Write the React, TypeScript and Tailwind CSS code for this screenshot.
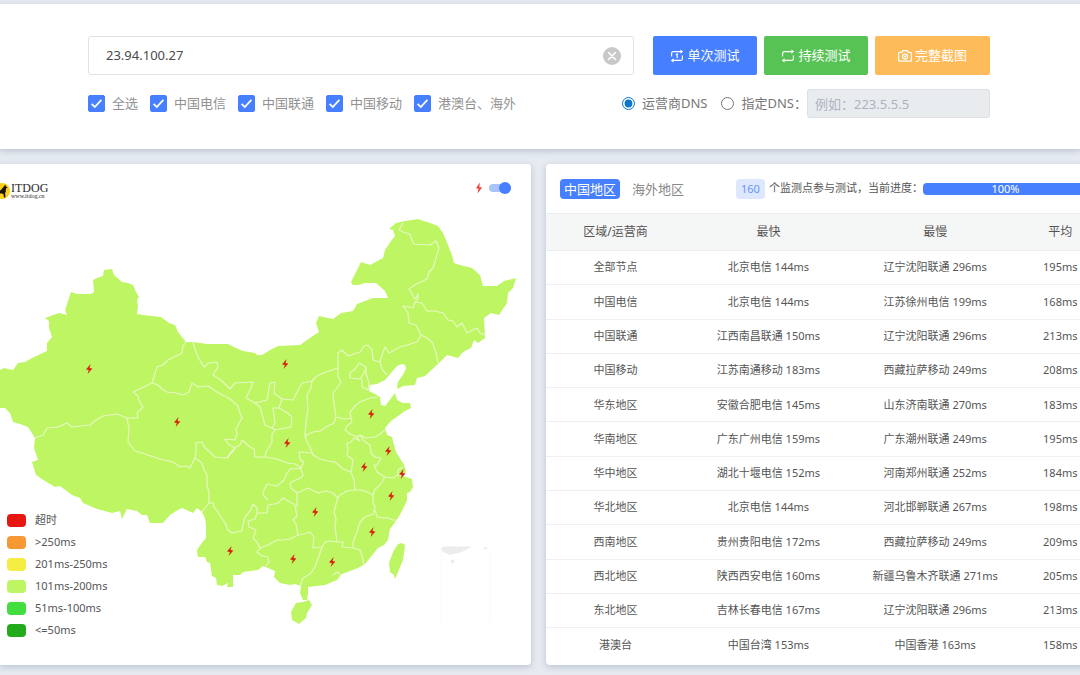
import { useState } from "react";

type ResultRow = {
  region: string;
  fastest: string;
  slowest: string;
  average: string;
};

const ISPS = ["全选", "中国电信", "中国联通", "中国移动", "港澳台、海外"];

const RESULTS: ResultRow[] = [
  { region: "全部节点", fastest: "北京电信 144ms", slowest: "辽宁沈阳联通 296ms", average: "195ms" },
  { region: "中国电信", fastest: "北京电信 144ms", slowest: "江苏徐州电信 199ms", average: "168ms" },
  { region: "中国联通", fastest: "江西南昌联通 150ms", slowest: "辽宁沈阳联通 296ms", average: "213ms" },
  { region: "中国移动", fastest: "江苏南通移动 183ms", slowest: "西藏拉萨移动 249ms", average: "208ms" },
  { region: "华东地区", fastest: "安徽合肥电信 145ms", slowest: "山东济南联通 270ms", average: "183ms" },
  { region: "华南地区", fastest: "广东广州电信 159ms", slowest: "广东潮州联通 249ms", average: "195ms" },
  { region: "华中地区", fastest: "湖北十堰电信 152ms", slowest: "河南郑州联通 252ms", average: "184ms" },
  { region: "华北地区", fastest: "北京电信 144ms", slowest: "河北邯郸联通 267ms", average: "198ms" },
  { region: "西南地区", fastest: "贵州贵阳电信 172ms", slowest: "西藏拉萨移动 249ms", average: "209ms" },
  { region: "西北地区", fastest: "陕西西安电信 160ms", slowest: "新疆乌鲁木齐联通 271ms", average: "205ms" },
  { region: "东北地区", fastest: "吉林长春电信 167ms", slowest: "辽宁沈阳联通 296ms", average: "213ms" },
  { region: "港澳台", fastest: "中国台湾 153ms", slowest: "中国香港 163ms", average: "158ms" },
];

const LEGEND = [
  { label: "超时", color: "bg-[#e61610]" },
  { label: ">250ms", color: "bg-[#f69833]" },
  { label: "201ms-250ms", color: "bg-[#f6ed44]" },
  { label: "101ms-200ms", color: "bg-[#bef663]" },
  { label: "51ms-100ms", color: "bg-[#42dd3f]" },
  { label: "<=50ms", color: "bg-[#24aa1d]" },
];

const MAINLAND =
  "-4,371 0,370 4,368 8,369 13,370 18,363 25,362 32,358 47,351 47,343 52,337 49,328 49,321 45,318 59,313 67,315 65,310 71,292 77,294 91,294 94,292 93,280 97,278 103,276 104,270 112,269 114,275 122,282 128,283 133,285 136,292 139,297 137,300 138,306 137,314 143,315 161,317 169,323 175,325 178,332 186,342 193,342 207,344 228,344 236,348 243,351 255,353 257,355 262,355 270,350 278,346 300,345 310,338 319,332 316,323 319,316 333,319 341,313 353,311 357,304 373,298 388,298 385,291 376,283 365,283 358,285 353,285 351,282 361,262 370,265 383,258 385,250 391,241 395,236 393,230 389,229 396,223 405,221 418,219 430,223 438,226 443,233 448,245 452,255 454,263 460,265 472,268 480,275 483,286 497,286 504,281 516,278 513,288 508,293 507,303 503,309 499,315 491,313 484,318 485,338 478,343 474,340 471,348 463,352 458,358 447,355 439,363 425,376 417,378 415,385 403,386 398,389 397,387 398,382 404,373 406,368 405,365 402,364 397,366 391,373 385,380 377,384 370,385 369,391 375,394 380,397 381,405 385,406 392,397 395,393 397,400 403,403 410,403 411,408 405,411 398,416 391,421 385,428 387,435 392,437 394,445 396,452 401,460 404,465 406,472 403,476 412,479 413,487 410,492 407,493 407,500 404,507 398,518 393,525 390,529 389,534 388,540 384,545 378,548 365,564 358,568 342,574 337,580 325,585 308,587 308,593 307,600 303,600 300,593 301,586 295,584 290,585 280,583 274,577 275,571 268,568 263,566 258,570 243,572 240,575 233,575 233,587 227,587 228,583 222,586 217,585 216,578 212,576 210,563 207,562 205,557 198,557 197,550 201,544 206,538 206,525 205,518 202,512 197,508 193,513 182,508 176,511 170,515 163,523 150,523 147,515 142,515 137,511 127,509 122,519 120,511 112,513 97,509 90,506 83,503 80,498 72,495 60,486 55,487 45,481 36,475 32,462 38,460 34,448 35,438 28,427 20,424 13,422 10,413 5,408 -4,408";

const HAINAN = "296,603 303,602 309,600 312,605 307,613 306,618 299,624 292,620 291,612";
const TAIWAN = "398,544 402,543 405,545 404,553 403,560 398,572 395,579 394,575 390,572 389,563 393,552";

const BORDERS = [
  // Xinjiang, Tibet, Qinghai
  "35,438 43,435 47,428 58,427 67,423 72,427 90,425 96,420 103,416 117,414 127,418 138,418 137,413 143,407 139,401 138,396 133,392 152,383 157,367 163,365 168,360 182,353 183,346 186,342",
  "152,383 158,385 162,389 167,392 176,393 183,395 189,392 192,383 198,387 208,386 217,392 230,399 238,406 240,413 242,418 236,429 237,434 235,440 225,439 228,444 235,448 231,452 227,458 215,457 211,453 205,448 202,442 196,443 196,452 195,458 190,468 186,466 180,467 173,462 160,459 145,454 135,451 128,442 129,429 127,418",
  "195,458 202,463 204,470 207,475 207,485 209,493 209,503 205,508 202,512",
  // Inner Mongolia and Gansu
  "193,342 195,349 198,357 204,367 209,363 217,362 218,367 213,375 222,381 230,389 235,383 253,382 250,390 246,398 255,403 267,400 270,383 275,382 274,393 282,399 279,408 273,408 274,416 275,423 272,428 265,425 262,414 260,407 255,403",
  "282,399 293,400 297,392 302,383 312,381 317,376 323,373 332,370 338,368",
  "279,408 286,412 292,417 291,427 275,430 272,434 272,442 266,452 265,457 255,457 254,449 250,447 242,440 240,445 236,447 233,451 227,458",
  "272,428 275,430",
  "265,457 277,459 287,463 295,464 302,468",
  // Shanxi, Hebei, Henan
  "312,381 311,388 307,395 308,410 306,422 305,436 313,432 320,431 326,427 334,423 336,417 334,404 333,393 337,388 341,382 338,376 338,353 342,350 348,356 360,352 364,346 368,345 372,350 373,360 380,362 382,369 387,375",
  "380,362 382,355 385,347 389,353 400,347 407,345 417,342 421,335 416,325 409,323 408,313 403,306 413,308 415,302 422,303 427,311 435,311 443,313 448,320 453,321 457,327 462,323 467,333 477,328 480,333 485,335",
  "421,335 427,338 432,342 435,350 437,357 438,363",
  "403,223 399,230 403,232 410,234 412,240 414,244 430,245 436,241 439,248 436,258 433,268 429,272 427,279 416,284 409,289 412,294 415,299 418,294 418,298 415,303",
  "350,373 355,369 359,363 366,367 364,373 360,379 350,378 350,373",
  "366,367 366,374 369,383 368,390 362,387 362,379",
  "378,397 370,398 360,402 355,406 350,412 351,418 345,419 336,417",
  "351,418 352,422 347,426 345,430 350,434 357,437 360,435 366,438 375,437 380,434 385,430",
  "360,435 364,441 370,445 371,453 375,457 381,458 377,465 374,465 377,472 385,477 393,478 398,475 398,470 403,467",
  "398,475 403,476",
  "357,437 360,441 354,438 350,443 347,443 348,450 347,455 353,460 351,472 354,480 355,490 361,490 367,492 373,495 375,489 378,487 382,482 385,477",
  "305,436 307,442 310,447 313,455 320,459 327,461 335,462 343,469 351,472",
  "312,453 299,452 300,459 304,463 300,468 303,474 302,477 290,483 291,488 297,493 308,488 318,493 326,491 333,493 338,498 340,495 347,491 355,490",
  // Chongqing, Sichuan, Guizhou, Yunnan
  "302,468 290,469 286,475 284,480 277,486 267,484 264,490 263,495 268,500",
  "297,493 297,507",
  "209,503 213,503 214,507 218,512 221,517 225,523 228,530 232,533 242,531 243,524 245,517 250,511 253,504 257,508 257,513 267,513 268,505 274,504 278,503 283,498 290,502 295,505 297,516 293,520 296,524 298,535 290,539 283,540 277,540 268,545 260,548 257,542 253,538 256,530 249,527 248,521 255,519 257,513",
  "260,548 257,552 262,556 268,557 269,562 266,566",
  // Hunan, Jiangxi, Guangdong, Fujian
  "298,535 304,534 310,532 314,537 313,548 322,547 325,542 330,541 337,542 335,527 336,519 334,512 337,500 338,498",
  "337,542 343,542 342,547 353,548 360,550 362,556 364,565",
  "353,548 353,542 357,532 360,522 365,517 373,514 375,507 373,502 373,495",
  "375,510 377,517 384,518 388,518 393,520 396,520",
  "322,547 319,556 315,567 310,574 303,578 300,586",
  "333,575 337,572 341,575 338,579",
];

const NODES = [
  [89, 369],
  [285, 364],
  [177, 422],
  [287, 443],
  [371, 414],
  [388, 451],
  [364, 467],
  [402, 474],
  [391, 496],
  [315, 512],
  [372, 532],
  [230, 551],
  [293, 559],
  [332, 562],
];

const BOLT = "M4.6 0 0 5.4 2.8 6 1.6 10 6.4 4.6 3.6 4Z";

function BoltIcon() {
  return (
    <svg viewBox="0 0 7 12" className="h-3 w-2 fill-[#f0443c]" aria-hidden="true">
      <path d="M4.4 0.5 0.4 6.3 3 6.6 2 11.6 6.6 5.4 3.8 5Z" />
    </svg>
  );
}

function LoopIcon({ once = false }: { once?: boolean }) {
  return (
    <svg viewBox="0 0 14 14" className="size-3.5" fill="none" stroke="currentColor" strokeWidth="1.2" aria-hidden="true">
      <path d="M1.6 7.6V4.2a1.6 1.6 0 0 1 1.6-1.6H11" />
      <path d="M12.4 6.4v3.4a1.6 1.6 0 0 1-1.6 1.6H3" />
      <path d="M10.4.4 13.2 2.6l-2.8 2.2ZM3.6 9.2.8 11.4l2.8 2.2Z" fill="currentColor" stroke="none" />
      {once ? <path d="M5.8 5.8 7.2 5v4.2" /> : null}
    </svg>
  );
}

function CameraIcon() {
  return (
    <svg viewBox="0 0 14 14" className="size-3.5" fill="none" stroke="currentColor" strokeWidth="1.2" aria-hidden="true">
      <path d="M1.6 3.4h2.2l1-1.8h4.4l1 1.8h2.2q1 0 1 1v6.8q0 1-1 1H1.6q-1 0-1-1V4.4q0-1 1-1Z" />
      <circle cx="7" cy="7.6" r="2.5" />
      <circle cx="7" cy="7.6" r="0.4" fill="currentColor" />
    </svg>
  );
}

function Logo() {
  return (
    <div className="-ml-1.5 flex items-center gap-px pt-1.5">
      <svg viewBox="0 0 15 15" className="size-4" aria-hidden="true">
        <circle cx="7.5" cy="7.5" r="7.5" fill="#fbd116" />
        <path d="M10.6 1.4 11 3l1.8 1.4-1.6.8-.2 3.2-.6.8.4 4-1.4.6-.6-3.6L6.4 9.6l-1.6.8.2 3.2H3.6L3 9.8 1.4 10.6l.4-1.8L6.6 6.6 9.4 3Z" fill="#17130a" />
      </svg>
      <div className="flex flex-col font-['Liberation_Serif',serif] text-[#2b2b2b]">
        <span className="text-xs leading-2.5">ITDOG</span>
        <span className="text-[6px] leading-1.5">www.itdog.cn</span>
      </div>
    </div>
  );
}

function ChinaMap() {
  return (
    <svg viewBox="0 212 531 453" className="block w-full" role="img" aria-label="中国地区延迟地图">
      <g fill="#bef663">
        <polygon points={MAINLAND} />
        <polygon points={HAINAN} />
        <polygon points={TAIWAN} />
      </g>
      <g fill="none" stroke="#e6f7c4" strokeWidth="1.2" strokeLinejoin="round">
        {BORDERS.map((points) => (
          <polyline key={points} points={points} />
        ))}
      </g>
      <g fill="#ececec">
        <path d="M441 548 445 546.500H472L462 552 450 555 443 552Z" />
        <path d="M450 561 454 559 454 562 452 564Z" />
        <path d="M484 547 488 548 485 550Z" />
      </g>
      <path d="M441 548V623M490 548V623" stroke="#fafafa" />
      <g fill="#d8260f">
        {NODES.map(([x, y]) => (
          <path key={`${x}-${y}`} d={BOLT} transform={`translate(${x - 3} ${y - 5})`} />
        ))}
      </g>
    </svg>
  );
}

export default function App() {
  const [host, setHost] = useState("23.94.100.27");
  const [dnsMode, setDnsMode] = useState<"isp" | "custom">("isp");
  const [tab, setTab] = useState<"cn" | "overseas">("cn");

  return (
    <div className="min-h-screen overflow-hidden bg-[#e6eaf1] pt-1 font-['Noto_Sans','Noto_Sans_CJK_SC',sans-serif] text-[13px] text-[#555]">
      <section className="bg-white pt-8 pr-0.5 pb-[31px] shadow-[0_2px_6px_rgba(90,110,130,0.3)]">
        <div className="mx-auto flex max-w-[902px] flex-col gap-3.5">
          <div className="flex items-stretch gap-[7px]">
            <div className="mr-3 flex h-[39px] min-w-0 flex-1 items-center rounded-[3px] border border-[#dfe2e6] pr-3 pl-[17px]">
              <input
                aria-label="域名或IP"
                value={host}
                onChange={(event) => setHost(event.target.value)}
                className="min-w-0 flex-1 bg-transparent text-[13px] text-[#4a4a4a] outline-none"
              />
              <button type="button" aria-label="清空" onClick={() => setHost("")}>
                <svg viewBox="0 0 18 18" className="size-[18px]" aria-hidden="true">
                  <circle cx="9" cy="9" r="9" fill="#c8c8c8" />
                  <path d="m5.500 5.500 7 7m0-7-7 7" stroke="#fff" strokeWidth="1.6" strokeLinecap="round" />
                </svg>
              </button>
            </div>
            <button type="button" className="flex w-26 items-center justify-center gap-[3px] rounded-xs bg-[#467fff] text-white">
              <LoopIcon once />
              单次测试
            </button>
            <button type="button" className="flex w-26 items-center justify-center gap-[3px] rounded-xs bg-[#57c355] text-white">
              <LoopIcon />
              持续测试
            </button>
            <button type="button" className="flex w-[115px] items-center justify-center gap-[3px] rounded-xs bg-[#fdbb59] text-white">
              <CameraIcon />
              完整截图
            </button>
          </div>

          <div className="flex items-center justify-between">
            <div className="flex items-center gap-3 text-[#929292]">
              {ISPS.map((isp) => (
                <label key={isp} className="flex items-center gap-[7px]">
                  <span className="grid size-[17px]">
                    <input
                      type="checkbox"
                      defaultChecked
                      className="peer col-start-1 row-start-1 size-[17px] appearance-none rounded-xs border border-[#c4c8ce] checked:border-[#467fff] checked:bg-[#467fff]"
                    />
                    <svg
                      viewBox="0 0 17 17"
                      className="pointer-events-none col-start-1 row-start-1 hidden size-[17px] peer-checked:block"
                      fill="none"
                      stroke="#fff"
                      strokeWidth="1.8"
                      aria-hidden="true"
                    >
                      <path d="m3.600 8.800 3.200 3.200 6.600-7.200" />
                    </svg>
                  </span>
                  {isp}
                </label>
              ))}
            </div>
            <div className="flex items-center text-[#777]">
              <label className="mr-3.5 flex items-center gap-[7px]">
                <input
                  type="radio"
                  name="dns"
                  checked={dnsMode === "isp"}
                  onChange={() => setDnsMode("isp")}
                  className="size-[13px] accent-[#0a78d1]"
                />
                运营商DNS
              </label>
              <label className="flex items-center gap-[7px]">
                <input
                  type="radio"
                  name="dns"
                  checked={dnsMode === "custom"}
                  onChange={() => setDnsMode("custom")}
                  className="size-[13px] accent-[#0a78d1]"
                />
                指定DNS：
              </label>
              <input
                aria-label="DNS服务器"
                placeholder="例如：223.5.5.5"
                disabled={dnsMode === "isp"}
                className="h-[29px] w-[183px] rounded-[3px] border border-[#dcdfe4] bg-white px-[7px] text-[13px] placeholder:text-[#adb3bf] disabled:bg-[#e9ecef]"
              />
            </div>
          </div>
        </div>
      </section>

      <main className="mt-[15px] -mr-[22px] grid grid-cols-[531fr_556fr] gap-[15px]">
        <section className="relative rounded-r bg-white shadow-[0_2px_6px_rgba(90,110,130,0.3)]">
          <div className="flex h-12 items-center justify-between pr-5">
            <Logo />
            <div className="flex items-center gap-1.5">
              <BoltIcon />
              <input
                type="checkbox"
                role="switch"
                aria-label="显示节点"
                defaultChecked
                className="flex h-2 w-[22px] appearance-none items-center rounded-full bg-gray-300 before:size-3 before:rounded-full before:bg-gray-500 checked:justify-end checked:bg-[#a9c2f7] checked:before:bg-[#467fff]"
              />
            </div>
          </div>
          <ChinaMap />
          <ul className="absolute bottom-6 left-[7px] text-[11px] leading-[22px]">
            {LEGEND.map(({ label, color }) => (
              <li key={label} className="flex items-center gap-[9px]">
                <span className={`h-[13px] w-[19px] rounded ${color}`} />
                {label}
              </li>
            ))}
          </ul>
        </section>

        <section className="overflow-hidden rounded-l bg-white shadow-[0_2px_6px_rgba(90,110,130,0.3)]">
          <div className="flex h-[49px] items-center pr-3.5 pl-3.5">
            <div className="flex gap-2">
              <button
                type="button"
                onClick={() => setTab("cn")}
                className={`rounded px-1 leading-5 ${tab === "cn" ? "bg-[#467fff] text-white" : "text-[#888]"}`}
              >
                中国地区
              </button>
              <button
                type="button"
                onClick={() => setTab("overseas")}
                className={`rounded px-1 leading-5 ${tab === "overseas" ? "bg-[#467fff] text-white" : "text-[#888]"}`}
              >
                海外地区
              </button>
            </div>
            <span className="ml-12 rounded bg-[#dde7fd] px-[5px] text-[11px] leading-5 text-[#6b96f5]">160</span>
            <span className="ml-1 text-[11px] whitespace-nowrap">个监测点参与测试，当前进度：</span>
            <div className="h-3 flex-1 rounded bg-[#467fff] text-center text-[11px] leading-3 text-white">100%</div>
          </div>
          <table className="h-[449px] w-full table-fixed text-center text-[11px]">
            <thead className="bg-[#f5f6f6] text-xs">
              <tr className="h-[37px] border-y border-[#ebecee]">
                <th className="w-1/4 font-normal">区域/运营商</th>
                <th className="w-[30%] font-normal">最快</th>
                <th className="font-normal">最慢</th>
                <th className="w-[15%] font-normal">平均</th>
              </tr>
            </thead>
            <tbody>
              {RESULTS.map((row) => (
                <tr key={row.region} className="h-[34px] border-b border-[#eff0f2] last:border-0">
                  <td>{row.region}</td>
                  <td>{row.fastest}</td>
                  <td>{row.slowest}</td>
                  <td>{row.average}</td>
                </tr>
              ))}
            </tbody>
          </table>
        </section>
      </main>
    </div>
  );
}
